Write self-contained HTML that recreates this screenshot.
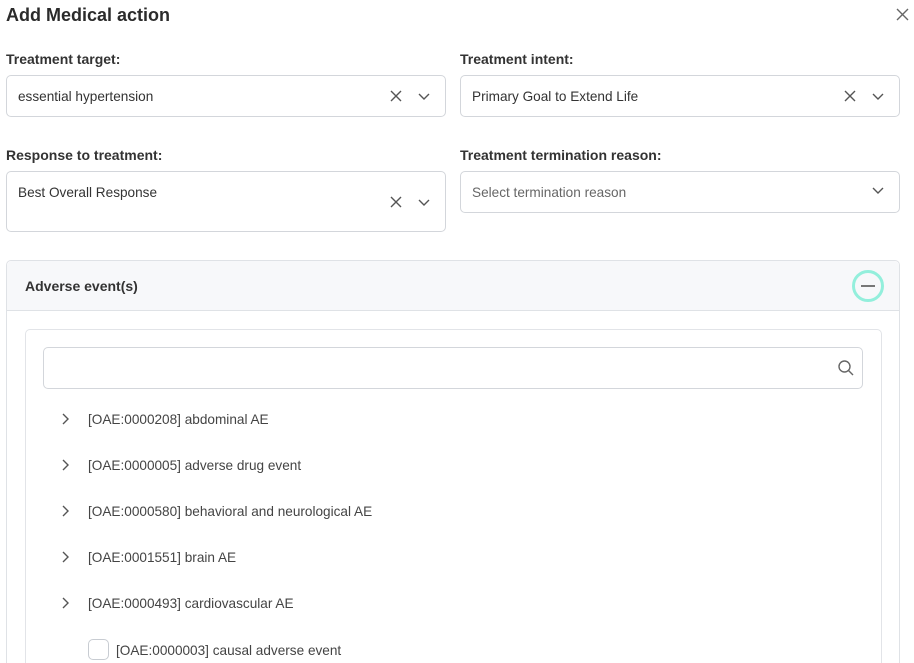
<!DOCTYPE html>
<html style="overflow:hidden;height:663px"><head><style>
*{box-sizing:border-box;margin:0;padding:0}
body{width:914px;height:663px;overflow:hidden;background:#fff;font-family:"Liberation Sans",sans-serif;color:#333;position:relative}
.a{position:absolute}
.t{font-size:18px;font-weight:bold;left:6px;top:5px;color:#2b2b2b}
.l{font-size:14px;font-weight:bold;color:#333}
.in{border:1px solid #d3d6db;border-radius:5px;background:#fff}
.v{font-size:13.6px;color:#333}
.ph{font-size:13.6px;color:#666}
.row{font-size:13.6px;color:#444}
</style></head><body>
<div class="a t">Add Medical action</div>
<svg class="a" style="left:896px;top:8px" width="13" height="13" viewBox="0 0 13 13"><path d="M1 1L12 12M12 1L1 12" stroke="#666" stroke-width="1.4"/></svg>

<div class="a l" style="left:6px;top:51px">Treatment target:</div>
<div class="a l" style="left:460px;top:51px">Treatment intent:</div>
<div class="a in" style="left:6px;top:75px;width:440px;height:42px"></div>
<div class="a v" style="left:18px;top:89px">essential hypertension</div>
<div class="a in" style="left:460px;top:75px;width:440px;height:42px"></div>
<div class="a v" style="left:472px;top:89px">Primary Goal to Extend Life</div>

<div class="a l" style="left:6px;top:147px">Response to treatment:</div>
<div class="a l" style="left:460px;top:147px">Treatment termination reason:</div>
<div class="a in" style="left:6px;top:171px;width:440px;height:61px"></div>
<div class="a v" style="left:18px;top:185px">Best Overall Response</div>
<div class="a in" style="left:460px;top:171px;width:440px;height:42px"></div>
<div class="a ph" style="left:472px;top:185px">Select termination reason</div>

<svg class="a" style="left:0;top:0" width="914" height="663">
<g stroke="#555" stroke-width="1.4" fill="none">
<path d="M391 91L401 101M401 91L391 101"/><path d="M419 94L424 99L429 94"/>
<path d="M845 91L855 101M855 91L845 101"/><path d="M873 94L878 99L883 94"/>
<path d="M391 197L401 207M401 197L391 207"/><path d="M419 200L424 205L429 200"/>
<path d="M873 188L878 193L883 188"/>
</g>
</svg>

<div class="a" style="left:6px;top:260px;width:894px;height:420px;border:1px solid #dfe2e6;border-radius:5px"></div>
<div class="a" style="left:7px;top:261px;width:892px;height:50px;background:#f7f8fa;border-bottom:1px solid #dfe2e6;border-radius:5px 5px 0 0"></div>
<div class="a l" style="left:25px;top:278px">Adverse event(s)</div>
<div class="a" style="left:852px;top:270px;width:32px;height:32px;border:3px solid #93efdc;border-radius:50%"></div>
<div class="a" style="left:861px;top:285px;width:14px;height:2px;background:#777"></div>

<div class="a" style="left:25px;top:329px;width:857px;height:360px;border:1px solid #e2e4e8;border-radius:5px"></div>
<div class="a in" style="left:43px;top:347px;width:820px;height:42px"></div>
<svg class="a" style="left:837px;top:359px" width="18" height="18"><circle cx="7.5" cy="7.5" r="5.5" stroke="#666" stroke-width="1.4" fill="none"/><path d="M11.5 11.5L16 16" stroke="#666" stroke-width="1.4"/></svg>

<svg class="a" style="left:60px;top:411px" width="14" height="210"><g stroke="#555" stroke-width="1.4" fill="none">
<path d="M3 3L8 8L3 13"/><path d="M3 49L8 54L3 59"/><path d="M3 95L8 100L3 105"/><path d="M3 141L8 146L3 151"/><path d="M3 187L8 192L3 197"/></g></svg>
<div class="a row" style="left:88px;top:412px">[OAE:0000208] abdominal AE</div>
<div class="a row" style="left:88px;top:458px">[OAE:0000005] adverse drug event</div>
<div class="a row" style="left:88px;top:504px">[OAE:0000580] behavioral and neurological AE</div>
<div class="a row" style="left:88px;top:550px">[OAE:0001551] brain AE</div>
<div class="a row" style="left:88px;top:596px">[OAE:0000493] cardiovascular AE</div>
<div class="a" style="left:88px;top:639px;width:21px;height:21px;border:1.5px solid #c8ccd2;border-radius:5px"></div>
<div class="a row" style="left:116px;top:643px">[OAE:0000003] causal adverse event</div>
</body></html>
